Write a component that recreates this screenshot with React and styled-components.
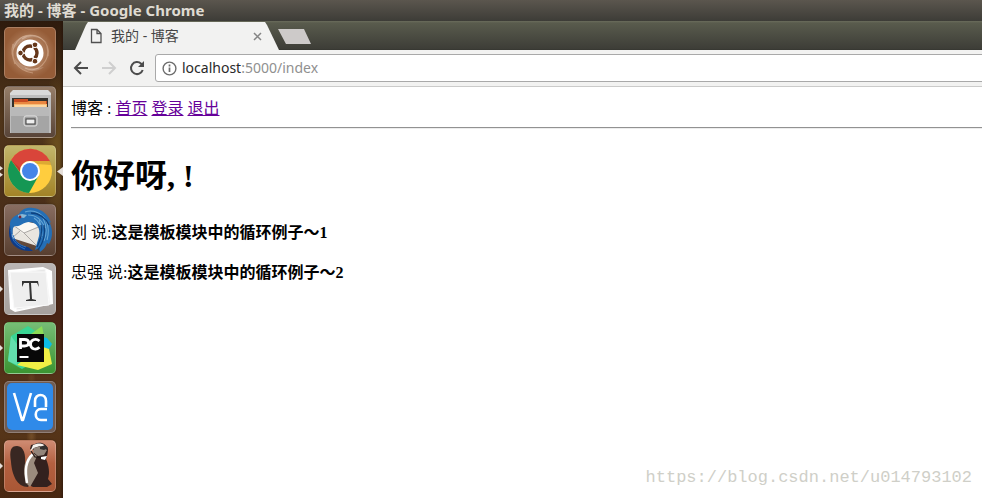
import React from "react";
import styled, { createGlobalStyle } from "styled-components";

const GlobalStyle = createGlobalStyle`
  * { box-sizing: border-box; }
  html, body { margin: 0; background: #fff; }
  body { overflow: hidden; }
`;

const uiFont = `"Noto Sans", "Noto Sans CJK SC", sans-serif`;
const pageFont = `"Liberation Serif", "Noto Sans CJK SC", serif`;

const Desktop = styled.div`
  display: flex;
  flex-direction: column;
  min-height: 100vh;
`;

const TitleBar = styled.header`
  height: 21px;
  padding-left: 4px;
  background: linear-gradient(#5b564e, #3d3c37);
  color: #dfdbd2;
  font: bold 15px/20px ${uiFont};
  white-space: nowrap;
`;

const Workspace = styled.div`
  flex: 1;
  display: flex;
`;

const Launcher = styled.nav`
  flex: none;
  width: 63px;
  padding: 6px 0 6px 4px;
  display: flex;
  flex-direction: column;
  gap: 7px;
  background:
    linear-gradient(90deg, transparent 95%, #21100880),
    radial-gradient(ellipse at 90% 28%, #6d511e 0%, transparent 18%),
    radial-gradient(ellipse at 50% 84%, #77512a 0%, transparent 12%),
    linear-gradient(#2e1b0d 0%, #50351a 20%, #4a2e19 40%, #4a2515 62%, #5a391b 82%, #482711 100%);
`;

const LauncherButton = styled.button`
  position: relative;
  width: 52px;
  height: 52px;
  padding: 0;
  border: 1px solid #ffffff38;
  border-radius: 5px;
  background: ${(p) => p.$tint};
  box-shadow: 0 0 2px #1a0d0666;

  > svg {
    display: block;
    width: 50px;
    height: 50px;
  }
`;

const Marker = styled.i`
  position: absolute;
  top: 22px;
  left: -5px;
  width: 3px;
  height: 6px;
  background: #e5dfda;
  clip-path: polygon(0 0, 100% 50%, 0 100%);
`;

const DoubleMarker = styled(Marker)`
  top: 20px;
  height: 11px;
  clip-path: polygon(0 0, 100% 20%, 0 40%, 0 60%, 100% 80%, 0 100%);
`;

const FocusMarker = styled(Marker)`
  left: 52px;
  top: 21px;
  width: 6px;
  height: 9px;
  clip-path: polygon(0 50%, 100% 0, 100% 100%);
`;

const Browser = styled.section`
  flex: 1;
  min-width: 0;
  display: flex;
  flex-direction: column;
  background: #fff;
`;

const TabStrip = styled.div`
  height: 29px;
  padding: 1px 0 0 12px;
  display: flex;
  background: linear-gradient(#6a6c5c 0, #595b4d 2px, #3d3d37 28px, #33342e 29px);
`;

const Tab = styled.div`
  width: 204px;
  height: 28px;
  padding: 0 17px 0 15px;
  display: flex;
  align-items: center;
  background: #f2f2f1;
  clip-path: polygon(0 100%, 11px 3px, 13px 0, 190px 0, 192px 3px, 204px 100%);
  color: #454545;
  font: 14px/28px ${uiFont};
`;

const TabTitle = styled.span`
  flex: 1;
  margin-left: 9px;
  white-space: nowrap;
`;

const IconButton = styled.button`
  display: flex;
  padding: 0;
  border: 0;
  background: none;
  color: #4c4c4c;

  &:disabled { color: #cfcfcf; }
`;

const NewTab = styled.button`
  width: 33px;
  height: 15px;
  margin-top: 7px;
  margin-left: -1px;
  padding: 0;
  border: 0;
  background: #cdcac9;
  clip-path: polygon(0 0, 26px 0, 33px 100%, 8px 100%);
`;

const Toolbar = styled.div`
  height: 37px;
  padding: 4px 0 4px 9px;
  display: flex;
  align-items: center;
  gap: 10px;
  background: #f2f2f1;
  border-bottom: 1px solid #cbcbca;
`;

const AddressBar = styled.div`
  flex: 1;
  height: 28px;
  margin-left: -1px;
  margin-right: -4px;
  padding-left: 6px;
  display: flex;
  align-items: center;
  gap: 5px;
  border: 1px solid #a9a9a9;
  border-radius: 3px;
  background: #fff;
  color: #6c6c6c;
`;

const Address = styled.span`
  flex: 1;
  color: #909090;
  font: 14px/26px ${uiFont};
  outline: none;
`;

const Host = styled.span`
  color: #292929;
`;

const Page = styled.main`
  flex: 1;
  display: flex;
  flex-direction: column;
  padding: 10px 0 8px 8px;
  color: #000;
  font: 16px/24px ${pageFont};
`;

const PageLink = styled.a`
  color: #660099;
  text-decoration: underline;
`;

const Divider = styled.hr`
  width: 100%;
  margin: 6px 0 8px;
  border: 0;
  border-top: 1px solid #929292;
  border-bottom: 1px solid #ededed;
`;

const Greeting = styled.h1`
  margin: 16px 0 21px;
  font-size: 32px;
  line-height: 47px;
`;

const Post = styled.p`
  margin: 0 0 16px;
`;

const Watermark = styled.footer`
  margin: auto 10px 0 0;
  text-align: right;
  color: #cfcfc8;
  font: 17px/24px "Liberation Mono", monospace;
`;

const UbuntuIcon = () => (
  <svg viewBox="0 0 50 50" fill="none">
    <g stroke="#e9c6aa" strokeOpacity=".45" strokeWidth="1.2">
      <path d="M10 36C3 18 15 4 31 8M17 11C32 1 46 15 43 28M42 18C46 34 32 46 20 40M8 16C4 31 13 43 28 45" />
    </g>
    <path d="M8 16C18 3 35 5 43 16C29 3 17 11 8 22ZM9 29C13 44 29 47 39 39C26 42 15 39 9 29Z" fill="#fff" opacity=".18" />
    <circle cx="25" cy="25" r="13.5" fill="#fff" />
    <circle cx="25" cy="25" r="7" stroke="#65371a" strokeWidth="3.4" strokeDasharray="12.7 2" strokeDashoffset="-8" />
    <g fill="#65371a" stroke="#fff"><circle cx="15.5" cy="25" r="2.8" /><circle cx="30" cy="16.8" r="2.8" /><circle cx="30" cy="33.2" r="2.8" /></g>
  </svg>
);

const FilesIcon = () => (
  <svg viewBox="0 0 50 50">
    <path d="M8 3h35l3 3v14H5V6Z" fill="#d9d9d9" />
    <path d="M5 8h41v38H5Z" fill="#bdbdbd" />
    <path d="M7 11h36v10H7Z" fill="#34312c" />
    <path d="M9 12h14v2h19v7H9Z" fill="#c84b22" />
    <path d="M9 15h13l2-1h17v7H9Z" fill="#e98741" />
    <path d="M9 17h33v4H9Z" fill="#f9bd76" />
    <path d="M10 19h31" stroke="#fff2d1" />
    <path d="M6 20h38v26H6Z" fill="#a5a5a5" />
    <path d="M6 20h38v9H6Z" fill="#b9b9b9" />
    <rect x="19" y="29" width="13" height="10" rx="2" fill="#a1a1a1" stroke="#e2e2e2" />
    <rect x="21" y="32" width="9" height="5" fill="#eee" stroke="#414141" />
  </svg>
);

const ChromeIcon = () => (
  <svg viewBox="0 0 50 50">
    <circle cx="25" cy="25" r="22" fill="#ffcd3e" />
    <path d="M6 14A22 22 0 0 1 45 15H25A10 10 0 0 0 15 26Z" fill="#d9453a" />
    <path d="M6 14A22 22 0 0 0 24 47L34 29A10 10 0 0 1 16 28Z" fill="#159754" />
    <path d="M6 14 16 28 15 22ZM27 15h18l1 4-14-1Z" fill="#551c0c" opacity=".2" />
    <circle cx="25" cy="25" r="10" fill="#fff" />
    <circle cx="25" cy="25" r="8" fill="#4585e8" />
  </svg>
);

const MailIcon = () => (
  <svg viewBox="0 0 50 50">
    <path d="M6 17C2 27 4 37 11 42c5 4 11 4 17 4l-5-4c-8-1-13-5-14-12Z" fill="#0e3b88" />
    <path d="m8 19 26-1 3 5-5 18-25-8Z" fill="#e9e6e0" />
    <path d="m8 19 10 10 17-9-15-4Z" fill="#faf8f3" />
    <path d="m8 20 11 8 17-7M19 28l13 13M15 26 7 33" stroke="#aaa7a4" fill="none" />
    <path d="M5 19C5 14 9 11 14 9c2-4 7-7 14-6 9 1 16 7 18 15l-2-2c4 8 4 16 0 23l-2-1c-1 4-4 7-7 9l-1-4-4 2 4-14c2-8-3-14-10-14-6 0-8 5-14 4-3 2-3 5-2 9-2-2-3-6-3-11Z" fill="#246fb6" />
    <path d="m13 10 4-1 5 1-3 3-6-1Z" fill="#8ab8d4" />
    <circle cx="15" cy="12" r="1.4" fill="#7b2636" />
    <path d="M20 7c8-3 16 1 21 8M23 10c9 0 14 5 17 13M29 13c7 4 8 12 8 18M38 13c4 8 4 16 1 23M41 15c3 7 3 13 1 20M34 15c3 6 3 12 2 18" fill="none" stroke="#68a7d5" strokeWidth="1.1" />
    <path d="M39 20c2 10-1 18-6 25M36 20c2 9-1 15-4 22M26 8c8 0 15 5 18 12" fill="none" stroke="#0e427f" strokeWidth="1.3" />
    <path d="M6 25c0 9 4 15 14 19M8 30c2 7 6 10 13 12" fill="none" stroke="#2d75c4" />
  </svg>
);

const TypeIcon = () => (
  <svg viewBox="0 0 50 50">
    <path d="m3 6 35-3 9 4 1 33-38 8-5-3Z" fill="#fff" />
    <path d="m4 10 36-5 5 34-33 7Z" fill="#e7e7e7" stroke="#f8f8f8" />
    <path d="M5 8h36l3 33-35 3Z" fill="#eee" stroke="#fafafa" />
    <path d="M17 17h16l1 6-2-4h-6l1 16 4 1v1H21v-1l4-1-1-16h-5l-2 4Z" fill="#343434" />
  </svg>
);

const PyIcon = () => (
  <svg viewBox="0 0 50 50">
    <path d="m6 13 17-10 13 9-3 25-16 9L3 38Z" fill="#39d594" />
    <path d="m6 13 6 8v21L3 38Z" fill="#62dfad" />
    <path d="m26 11 11-8 2 10v8H26Z" fill="#8bdc56" />
    <path d="m38 14 4 1 5 6-5 8h-4Z" fill="#0cbce5" />
    <path d="m17 38 21-14 6 2 3 15-14 6-21-5Z" fill="#f0ef45" />
    <path d="M12 11h27v28H12Z" fill="#080808" />
    <path d="M15.5 26V16.5h4c5.5 0 5.5 6.5 0 6.5h-4M34.5 18c-4-3.5-9-1-9 3.3s5 6.7 9 3" fill="none" stroke="#fff" strokeWidth="2.8" />
    <path d="M14.5 33h9v2h-9Z" fill="#fff" />
  </svg>
);

const VncIcon = () => (
  <svg viewBox="0 0 50 50">
    <rect x="2" y="1" width="46" height="47" rx="5" fill="#2f8ae9" />
    <path d="m9 11 8 27h1l8-27M30 25v-6c0-8 11-8 11 0v6M42 27h-6c-7 0-7 11 0 11h6" fill="none" stroke="#fff" strokeWidth="2.6" strokeLinejoin="round" />
  </svg>
);

const BeaverIcon = () => (
  <svg viewBox="0 0 50 50">
    <path d="M23 46C12 46 7 34 6 21 4 9 6 5 12 5c7 0 9 9 8 19 0 10 0 15 4 20Z" fill="#392722" />
    <path d="m29 9-4-1 1-4 4-1c5-3 12 0 13 5 0 4-1 7-2 10 3 7 4 14 2 20l4 5-5 3H28l-6-3 7-18Z" fill="#33211e" />
    <path d="M28 12C19 18 17 28 21 42l4 4 8-14-4-10 3-7Z" fill="#9b8b7d" />
    <path d="M28 13C20 20 20 30 22 42" fill="none" stroke="#fff" strokeWidth="2.5" />
    <path d="M25 11 28 4c4-2 11-3 13 3l-6-2-6 2Z" fill="#f5f2ed" />
    <path d="m29 7 7-2 6 4-3 5-6 1-5-4Z" fill="#93857b" />
    <path d="m35 6 5-2 3 3-4 2-4-1Z" fill="#33302e" />
    <path d="m26 10 4 6 8 1" fill="none" stroke="#251a18" strokeWidth="1.3" />
    <path d="m36 16 6-1-2 4-4-1Z" fill="#fff" />
  </svg>
);

const apps = [
  { name: "Ubuntu", icon: UbuntuIcon, tint: "radial-gradient(#c99f80, #955c37 72%)" },
  { name: "Files", icon: FilesIcon, tint: "linear-gradient(#957d68, #584438)" },
  { name: "Chrome", icon: ChromeIcon, tint: "linear-gradient(#c2b66b, #a28327)", open: "double", active: true },
  { name: "Thunderbird", icon: MailIcon, tint: "linear-gradient(#886d61, #583f30)" },
  { name: "Typora", icon: TypeIcon, tint: "linear-gradient(#bbb6b5, #a6a09d)", open: true },
  { name: "PyCharm", icon: PyIcon, tint: "linear-gradient(#76bd76, #3b9532)", open: true },
  { name: "VNC", icon: VncIcon, tint: "#715c52" },
  { name: "DBeaver", icon: BeaverIcon, tint: "linear-gradient(#cf8b72, #b46040 45%, #a95735)", open: true },
];

const posts = [
  { author: "刘", body: "这是模板模块中的循环例子～1" },
  { author: "忠强", body: "这是模板模块中的循环例子～2" },
];

export default function App() {
  return (
    <Desktop>
      <GlobalStyle />
      <TitleBar>我的 - 博客 - Google Chrome</TitleBar>
      <Workspace>
        <Launcher>
          {apps.map(({ name, icon: Icon, tint, open, active }) => (
            <LauncherButton key={name} aria-label={name} $tint={tint}>
              <Icon />
              {open === "double" ? <DoubleMarker /> : open && <Marker />}
              {active && <FocusMarker />}
            </LauncherButton>
          ))}
        </Launcher>
        <Browser>
          <TabStrip>
            <Tab>
              <svg width="12" height="16" viewBox="0 0 12 16" fill="none" stroke="#505050" strokeWidth="1.3"><path d="M1.5 1.5H7l4 4v9H1.5ZM7 1.5v4h4" /></svg>
              <TabTitle>我的 - 博客</TabTitle>
              <IconButton aria-label="Close tab"><svg width="9" height="9" viewBox="0 0 9 9" stroke="#858585" strokeWidth="1.5"><path d="m1 1 7 7M8 1 1 8" /></svg></IconButton>
            </Tab>
            <NewTab aria-label="New tab" />
          </TabStrip>
          <Toolbar>
            <IconButton aria-label="Back"><svg width="18" height="18" viewBox="0 0 18 18" fill="none" stroke="currentColor" strokeWidth="2"><path d="M16 9H3M9 3 3 9l6 6" /></svg></IconButton>
            <IconButton aria-label="Forward" disabled><svg width="18" height="18" viewBox="0 0 18 18" fill="none" stroke="currentColor" strokeWidth="2"><path d="M2 9h13M9 3l6 6-6 6" /></svg></IconButton>
            <IconButton aria-label="Reload"><svg width="18" height="18" viewBox="0 0 18 18" fill="none" stroke="currentColor" strokeWidth="2"><path d="M14.7 11A6 6 0 1 1 13.2 4.8L15 6.5" /><path d="M16 2v6h-6Z" fill="currentColor" stroke="none" /></svg></IconButton>
            <AddressBar>
              <svg width="15" height="15" viewBox="0 0 15 15" fill="none" stroke="currentColor"><circle cx="7.5" cy="7.5" r="6.4" strokeWidth="1.4" /><path d="M7.5 6.5V11M7.5 3.5v2" strokeWidth="1.7" /></svg>
              <Address role="textbox" aria-label="Address" contentEditable suppressContentEditableWarning><Host>localhost</Host>:5000/index</Address>
            </AddressBar>
          </Toolbar>
          <Page>
            <div>博客 : <PageLink href="#index">首页</PageLink> <PageLink href="#login">登录</PageLink> <PageLink href="#logout">退出</PageLink></div>
            <Divider />
            <Greeting>你好呀, !</Greeting>
            {posts.map((post) => <Post key={post.author}>{post.author} 说:<b>{post.body}</b></Post>)}
            <Watermark>https://blog.csdn.net/u014793102</Watermark>
          </Page>
        </Browser>
      </Workspace>
    </Desktop>
  );
}
